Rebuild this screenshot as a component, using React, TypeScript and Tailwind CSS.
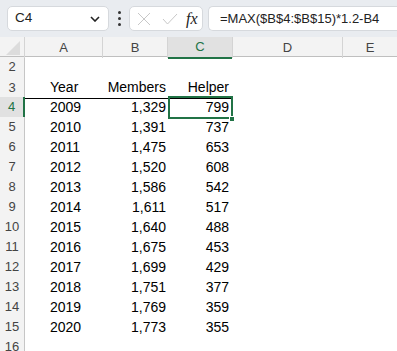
import React from "react";

const rows: [number, string, string, string][] = [
  [2, "", "", ""],
  [3, "Year", "Members", "Helper"],
  [4, "2009", "1,329", "799"],
  [5, "2010", "1,391", "737"],
  [6, "2011", "1,475", "653"],
  [7, "2012", "1,520", "608"],
  [8, "2013", "1,586", "542"],
  [9, "2014", "1,611", "517"],
  [10, "2015", "1,640", "488"],
  [11, "2016", "1,675", "453"],
  [12, "2017", "1,699", "429"],
  [13, "2018", "1,751", "377"],
  [14, "2019", "1,769", "359"],
  [15, "2020", "1,773", "355"],
  [16, "", "", ""],
];

const font = { fontFamily: '"Liberation Sans", Arial, sans-serif' };

export default function App() {
  return (
    <div className="w-[397px] h-[351px] overflow-hidden bg-white relative" style={font}>
      {/* Formula bar */}
      <div className="h-[37px] bg-[#e9ecf0] flex items-center gap-0">
        <div className="ml-[7px] w-[102px] h-[25px] bg-white border border-[#d6d9dd] rounded-[5px] flex items-center justify-between pl-[7px] pr-[8px]">
          <span className="text-[13.5px] text-[#222]">C4</span>
          <svg width="10" height="6" viewBox="0 0 10 6">
            <path d="M1 1 L5 5 L9 1" fill="none" stroke="#222" strokeWidth="1.6" />
          </svg>
        </div>
        <div className="w-[20px] flex flex-col items-center gap-[3px]">
          <div className="w-[3px] h-[3px] bg-[#333] rounded-full" />
          <div className="w-[3px] h-[3px] bg-[#333] rounded-full" />
          <div className="w-[3px] h-[3px] bg-[#333] rounded-full" />
        </div>
        <div className="w-[74px] h-[25px] bg-white border border-[#d6d9dd] rounded-[5px] flex items-center pl-[7px]">
          <svg width="14" height="14" viewBox="0 0 14 14">
            <path d="M1 1 L13 13 M13 1 L1 13" stroke="#c8c8c8" strokeWidth="1" fill="none" />
          </svg>
          <svg width="16" height="12" viewBox="0 0 16 12" className="ml-[11px]">
            <path d="M1 6 L5.5 11 L15 1" stroke="#c8c8c8" strokeWidth="1" fill="none" />
          </svg>
          <span
            className="ml-[8px] text-[16px] italic text-[#222]"
            style={{ fontFamily: '"Liberation Serif", "Times New Roman", serif' }}
          >
            fx
          </span>
        </div>
        <div className="ml-[5px] flex-1 h-[25px] bg-white border border-[#d6d9dd] rounded-l-[5px] border-r-0 flex items-center pl-[11px]">
          <span className="text-[13px] text-[#222] whitespace-nowrap">=MAX($B$4:$B$15)*1.2-B4</span>
        </div>
      </div>

      {/* Column headers */}
      <div className="grid grid-cols-[25px_78px_65px_64px_111px_1fr] h-[20px] bg-[#f3f3f3] border-b border-[#bfbfbf] text-[13px] text-[#444]">
        <div className="border-r border-[#d4d4d4] relative">
          <svg width="20" height="16" viewBox="0 0 20 16" className="absolute right-[3px] bottom-[2px]">
            <path d="M19 1 L19 15 L5 15 Z" fill="#dcdcdc" />
          </svg>
        </div>
        <div className="border-r border-[#d4d4d4] flex items-center justify-center">A</div>
        <div className="border-r border-[#d4d4d4] flex items-center justify-center">B</div>
        <div className="bg-[#e1e1e1] border-b-[2px] border-[#217346] -mb-[1px] flex items-center justify-center text-[#217346]">C</div>
        <div className="border-r border-[#d4d4d4] border-l border-l-[#d4d4d4] flex items-center justify-center">D</div>
        <div className="flex items-center justify-center">E</div>
      </div>

      {/* Rows */}
      {rows.map(([n, a, b, c]) => (
        <div key={n} className="grid grid-cols-[25px_78px_65px_64px_111px_1fr] h-[20px] text-[14px] text-black">
          <div
            className={
              n === 4
                ? "bg-[#e1e1e1] border-r-[2px] border-[#217346] border-b border-b-[#d4d4d4] flex items-center justify-center text-[13px] text-[#217346]"
                : "bg-[#f3f3f3] border-r border-[#c6c6c6] border-b border-b-[#d4d4d4] flex items-center justify-center text-[13px] text-[#444]"
            }
          >
            {n}
          </div>
          <div className={`flex items-center pl-[25px] ${n === 3 ? "border-b border-black" : ""}`}>{a}</div>
          <div className={`flex items-center justify-end pr-[2px] ${n === 3 ? "border-b border-black" : ""}`}>{b}</div>
          <div className={`relative flex items-center justify-end pr-[3px] ${n === 3 ? "border-b border-black" : ""}`}>
            {c}
            {n === 4 && (
              <>
                <div className="absolute left-0 top-[-1px] right-[-1px] bottom-[-1px] border-2 border-[#217346] pointer-events-none" />
                <div className="absolute right-[-3px] bottom-[-4px] w-[6px] h-[6px] bg-[#217346] border border-white" />
              </>
            )}
          </div>
          <div />
          <div />
        </div>
      ))}
    </div>
  );
}
